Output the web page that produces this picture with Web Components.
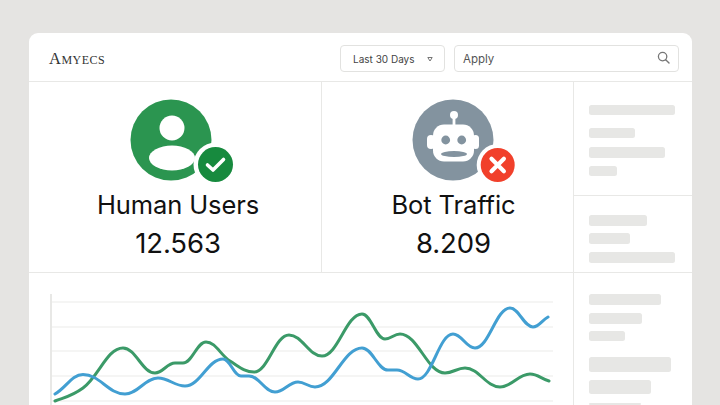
<!DOCTYPE html>
<html lang="en"><head><meta charset="utf-8"><title>Traffic</title>
<style>
html,body{margin:0;height:405px;overflow:hidden;background:#e5e4e2}
body{padding:33px 28px 0 29px;box-sizing:border-box;font-family:Inter,"Liberation Sans",sans-serif}
</style></head><body>
<dash-card>
  <dash-header slot="header"></dash-header>
  <stat-panel slot="human" label="Human Users" value="12.563" shift="6">
    <svg slot="icon" viewBox="118 96 120 90" width="120" height="90" aria-hidden="true">
      <circle cx="171" cy="140" r="40.5" fill="#2b9550"/>
      <circle cx="172" cy="128" r="12.5" fill="#fff"/>
      <ellipse cx="172" cy="158" rx="23" ry="12.5" fill="#fff"/>
      <circle cx="215.5" cy="164.5" r="22" fill="#fff"/>
      <circle cx="215.5" cy="164.5" r="17.5" fill="#178a3e"/>
      <path d="M207.5 165l5.5 5 10.5-10.5" fill="none" stroke="#fff" stroke-width="3.6" stroke-linecap="round" stroke-linejoin="round"/>
    </svg>
  </stat-panel>
  <stat-panel slot="bot" label="Bot Traffic" value="8.209" shift="12">
    <svg slot="icon" viewBox="388 96 131 90" width="131" height="90" aria-hidden="true">
      <circle cx="453" cy="140" r="40.5" fill="#83939f"/>
      <circle cx="454" cy="115" r="4" fill="#fff"/>
      <rect x="452.6" y="116" width="2.8" height="10" fill="#fff"/>
      <rect x="433" y="124.5" width="41" height="37" rx="11" fill="#fff"/>
      <rect x="427" y="135" width="8" height="14" rx="4" fill="#fff"/>
      <rect x="472" y="135" width="7" height="14" rx="3.5" fill="#fff"/>
      <circle cx="445.7" cy="140" r="4.4" fill="#83939f"/>
      <circle cx="461.7" cy="140" r="4.4" fill="#83939f"/>
      <ellipse cx="454" cy="154" rx="13" ry="3" fill="#83939f"/>
      <circle cx="497.7" cy="165" r="21" fill="#fff"/>
      <circle cx="497.7" cy="165" r="17" fill="#f1402b"/>
      <path d="M491.5 158.8l12.4 12.4M503.9 158.8l-12.4 12.4" fill="none" stroke="#fff" stroke-width="4.2" stroke-linecap="round"/>
    </svg>
  </stat-panel>
  <side-panel slot="side1" bars="86:10,46:10,76:11,28:10.5" gaps="13,9,7.5" top="23"></side-panel>
  <side-panel slot="side2" bars="58:11,41:11,86:11.5" gaps="7.5,7.5" top="18.5"></side-panel>
  <line-chart slot="chart"></line-chart>
  <side-panel slot="side3" bars="72:11,53:10.5,36:10.5,82:15,62:14,52:2" gaps="8,7,16,8,9" top="21"></side-panel>
</dash-card>
<script>
const mk=(name,html,init)=>customElements.define(name,class extends HTMLElement{
  constructor(){super();this.attachShadow({mode:'open'}).innerHTML=html;}
  connectedCallback(){init&&init.call(this,this.shadowRoot);}
});
mk('dash-card',`<style>
:host{display:block;width:663px;height:372px;background:#fff;border-radius:9px 9px 0 0;overflow:hidden}
.g{display:grid;grid-template-columns:293px 252px 118px;grid-template-rows:49px 114px 77px 132px;height:100%}
.h{grid-column:1/4;border-bottom:1px solid #e8e8e6;box-sizing:border-box}
.c{min-width:0;min-height:0;box-sizing:border-box}
.a{grid-row:2/4;border-right:1px solid #e8e8e6;border-bottom:1px solid #e8e8e6}
.s1{border-bottom:1px solid #e8e8e6}
.s2{border-bottom:1px solid #e8e8e6}
.ch{grid-column:1/3;border-right:1px solid #e8e8e6}
</style><div class="g">
<div class="h"><slot name="header"></slot></div>
<div class="c a"><slot name="human"></slot></div>
<div class="c a"><slot name="bot"></slot></div>
<div class="c s1"><slot name="side1"></slot></div>
<div class="c s2"><slot name="side2"></slot></div>
<div class="c ch"><slot name="chart"></slot></div>
<div class="c"><slot name="side3"></slot></div>
</div>`);
mk('dash-header',`<style>
:host{display:flex;align-items:center;height:48px;padding:3px 13px 0 20px;box-sizing:border-box}
.logo{font:400 16.5px "Liberation Serif",serif;font-variant:small-caps;color:#333;letter-spacing:.5px;flex:1}
.box{height:27px;box-sizing:border-box;border:1px solid #e2e2e0;border-radius:4px;display:flex;align-items:center;color:#444}
.sel{width:105px;padding:0 11px 0 12px;font:400 10px Inter,sans-serif;justify-content:space-between;margin-right:9px}
.inp{width:225px;padding:0 8px 0 8px;font:400 11.5px Inter,sans-serif;justify-content:space-between;color:#555}
</style><span class="logo">Amyecs</span>
<div class="box sel"><span>Last 30 Days</span><svg width="6" height="6" viewBox="0 0 6 6"><path d="M.8 1.5h4.4L3 5z" fill="none" stroke="#666" stroke-width=".9"/></svg></div>
<div class="box inp"><span>Apply</span><svg width="13" height="13" viewBox="0 0 13 13" style="margin-top:-2px"><circle cx="5.6" cy="5.6" r="4.2" fill="none" stroke="#777" stroke-width="1.3"/><path d="M8.7 8.7l3.3 3.3" stroke="#777" stroke-width="1.4" stroke-linecap="round"/></svg></div>`);
mk('stat-panel',`<style>
:host{display:flex;flex-direction:column;align-items:center;height:100%;padding-top:14px;box-sizing:border-box;color:#111;text-align:center}
::slotted(svg){display:block}
.l{font:400 25.5px/32px Inter,sans-serif;margin-top:3px;letter-spacing:-.1px}
.v{font:400 27.5px/32px Inter,sans-serif;margin-top:6px;letter-spacing:-.1px}
</style><slot name="icon"></slot><div class="l"></div><div class="v"></div>`,function(r){
  r.querySelector('.l').textContent=this.getAttribute('label');
  r.querySelector('.v').textContent=this.getAttribute('value');
  this.style.paddingLeft=this.getAttribute('shift')+'px';
});
mk('side-panel',`<style>
:host{display:flex;flex-direction:column;align-items:flex-start;padding-left:15px;box-sizing:border-box}
i{display:block;background:#e7e7e5;border-radius:2.5px}
</style>`,function(r){
  const gaps=this.getAttribute('gaps').split(',');
  this.style.paddingTop=this.getAttribute('top')+'px';
  this.getAttribute('bars').split(',').forEach((b,k)=>{
    const [w,h]=b.split(':');const e=document.createElement('i');
    e.style.cssText=`width:${w}px;height:${h}px;margin-bottom:${gaps[k]||0}px`;r.appendChild(e);
  });
});
const blue=[[55,394],[83,374.5],[125,394],[158,378],[185,386],[223,359],[241,376],[249,376],[275,392],[298,382],[315,387],[362,348],[388,370],[397,370],[418,379],[453,334],[475,348],[510,308],[533,327],[548,317]];
const green=[[55,401],[83,388],[123,348],[155,373],[175,363],[183,363],[206,342],[230,361],[254,372],[289,335],[322,356],[362,314],[385,339],[400,334],[445,373],[465,368],[500,387],[530,374],[549,381]];
const spline=p=>{
  const n=p.length,m=[];
  const sl=i=>(p[i+1][1]-p[i][1])/(p[i+1][0]-p[i][0]);
  for(let i=0;i<n;i++){
    if(i===0)m[i]=sl(0)*.8;else if(i===n-1)m[i]=sl(n-2)*.8;
    else{const a=sl(i-1),b=sl(i);m[i]=a*b<=0?0:(a+b)/2;}
  }
  let d=`M${p[0]}`;
  for(let i=0;i<n-1;i++){
    const h=(p[i+1][0]-p[i][0])*.4;
    d+=`C${p[i][0]+h} ${p[i][1]+m[i]*h} ${p[i+1][0]-h} ${p[i+1][1]-m[i+1]*h} ${p[i+1]}`;
  }
  return d;
};
mk('line-chart',`<style>
:host{display:block;height:100%}
svg{display:block}
</style><svg width="544" height="132" viewBox="29 273 544 132"></svg>`,function(r){
  let s=`<path d="M51 294V405" stroke="#dededc" stroke-width="1.4"/>`;
  for(const y of [302,327,351,376,401])s+=`<path d="M52 ${y}H553" stroke="#ececea" stroke-width="1.2"/>`;
  s+=`<path d="${spline(green)}" fill="none" stroke="#3b9a68" stroke-width="3" stroke-linecap="round"/>`;
  s+=`<path d="${spline(blue)}" fill="none" stroke="#429fd2" stroke-width="3" stroke-linecap="round"/>`;
  r.querySelector('svg').innerHTML=s;
});
</script></body></html>
